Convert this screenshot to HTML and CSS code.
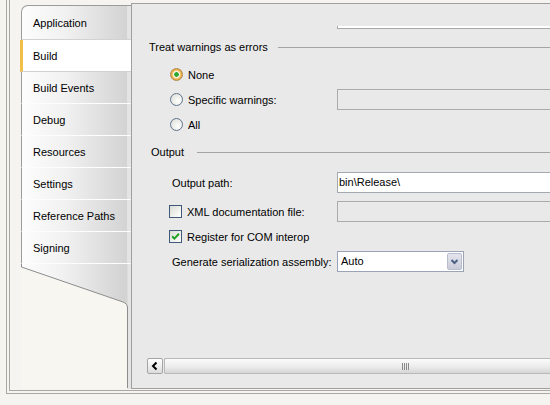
FILE: index.html
```html
<!DOCTYPE html>
<html>
<head>
<meta charset="utf-8">
<link rel="stylesheet" href="styles.css">
</head>
<body>
<div class="screen">
  <div class="frame">
    <div class="frame-inner">
      <nav class="tabs">
        <div class="tab first">Application</div>
        <div class="tab active">Build</div>
        <div class="tab">Build Events</div>
        <div class="tab">Debug</div>
        <div class="tab">Resources</div>
        <div class="tab">Settings</div>
        <div class="tab">Reference Paths</div>
        <div class="tab">Signing</div>
        <svg class="tail" width="110" height="125" viewBox="0 0 110 125">
          <defs>
            <linearGradient id="tg" x1="0" x2="1" y1="0" y2="0">
              <stop offset="0" stop-color="#fdfdfd"/>
              <stop offset="0.4" stop-color="#f1f1f1"/>
              <stop offset="0.96" stop-color="#d3d3d3"/>
            </linearGradient>
          </defs>
          <rect x="106" y="0" width="4" height="125" fill="#e4e4e4"/>
          <path d="M0,0 H106.5 V44 Q106,39.5 102,38 L0,3 Z" fill="url(#tg)"/>
          <path d="M0,3 L102,38 Q106,39.5 106,44 V125 H0 Z" fill="#f8f6f1"/>
          <path d="M0.5,0 V3 L102,38 Q106.5,39.5 106.5,44 V124" fill="none" stroke="#8c8c8c" stroke-width="1"/>
        </svg>
      </nav>
      <main class="panel">
        <div class="topbox"></div>
        <div class="legend legend-warn"><span>Treat warnings as errors</span><span class="rule"></span></div>
        <div class="options">
          <div class="row r-radio">
            <span class="lead"><span class="radio checked"></span><span class="label">None</span></span>
          </div>
          <div class="row r-radio">
            <span class="lead"><span class="radio"></span><span class="label">Specific warnings:</span></span>
            <span class="textbox disabled"></span>
          </div>
          <div class="row r-radio">
            <span class="lead"><span class="radio"></span><span class="label">All</span></span>
          </div>
        </div>
        <div class="legend legend-out"><span>Output</span><span class="rule"></span></div>
        <div class="row r-text r-path">
          <span class="lead">Output path:</span>
          <span class="textbox">bin\Release\</span>
        </div>
        <div class="row r-check r-xml">
          <span class="lead"><span class="check"></span><span class="label">XML documentation file:</span></span>
          <span class="textbox disabled"></span>
        </div>
        <div class="row r-check r-com">
          <span class="lead"><span class="check"><svg width="11" height="11" viewBox="0 0 11 11"><path d="M2.2 5.2 L4.4 7.6 L9 2.8" fill="none" stroke="#21a121" stroke-width="2"/></svg></span><span class="label">Register for COM interop</span></span>
        </div>
        <div class="row r-text r-gen">
          <span class="lead">Generate serialization assembly:</span>
          <span class="select"><span class="select-value">Auto</span><span class="select-btn"><svg width="13" height="15" viewBox="0 0 13 15"><path d="M3.5 6 L6.5 9 L9.5 6" fill="none" stroke="#4d6185" stroke-width="2"/></svg></span></span>
        </div>
        <div class="scrollbar">
          <span class="sb-btn"><svg width="14" height="14" viewBox="0 0 14 14"><path d="M8.5 3.5 L5 7 L8.5 10.5" fill="none" stroke="#000" stroke-width="2"/></svg></span>
          <span class="sb-thumb"><span class="grip"></span></span>
        </div>
      </main>
    </div>
  </div>
</div>
</body>
</html>
```
FILE: styles.css
```css
body {
  margin: 0;
  background: #f5f4f0;
  font: 11px "Liberation Sans", Arial, sans-serif;
  color: #000;
}
.screen {
  width: 550px;
  height: 405px;
  overflow: hidden;
}
.frame {
  margin-left: 6px;
  border-left: 1px solid #a9a8a3;
  border-bottom: 1px solid #a9a8a3;
  padding: 0 0 2px 2px;
}
.frame-inner {
  border-left: 1px solid #a9a8a3;
  border-bottom: 1px solid #a9a8a3;
  height: 390px;
  display: flex;
}
.tabs {
  margin-left: 11px;
  width: 110px;
  flex: none;
  display: flex;
  flex-direction: column;
  padding-top: 5px;
}
.tab {
  height: 31px;
  line-height: 32px;
  padding-left: 11px;
  border-left: 1px solid #9c9c9c;
  border-bottom: 1px solid #fdfdfd;
  background: linear-gradient(to right, #fdfdfd, #f1f1f1 40%, #d3d3d3 96%, #e4e4e4 96%);
  white-space: nowrap;
}
.tab.first {
  height: 33px;
  line-height: 34px;
  border-top: 1px solid #9c9c9c;
  border-top-left-radius: 7px;
  border-bottom-color: #d2d2d2;
}
.tab.active {
  background: #fff;
  border-left: 3px solid #f2c04a;
  margin-left: -1px;
  padding-left: 10px;
  border-bottom-color: #d2d2d2;
}
.tail {
  display: block;
  flex: none;
}
.panel {
  flex: 1;
  min-width: 0;
  margin-top: 3px;
  height: 386px;
  box-sizing: border-box;
  border: 1px solid #9f9f9f;
  border-right: none;
  background: #e9e9e9;
  overflow: hidden;
}
.topbox {
  margin: 22px 0 0 205px;
  height: 2px;
  background: #fff;
  border-left: 1px solid #a9a9a9;
  border-bottom: 1px solid #a9a9a9;
}
.legend {
  display: flex;
  align-items: center;
  height: 14px;
  white-space: nowrap;
}
.legend .rule {
  flex: 1;
  height: 0;
  border-top: 1px solid #a3a3a3;
}
.legend-warn {
  margin-top: 11px;
  padding-left: 17px;
}
.legend-warn .rule {
  margin-left: 10px;
}
.legend-out {
  margin-top: 8px;
  padding-left: 19px;
}
.legend-out .rule {
  margin-left: 13px;
}
.options {
  margin-top: 8px;
}
.row {
  display: flex;
  align-items: center;
  white-space: nowrap;
}
.lead {
  display: flex;
  align-items: center;
  flex: none;
}
.r-radio {
  height: 25px;
  margin-left: 38px;
}
.r-radio .lead {
  width: 167px;
}
.r-text {
  height: 21px;
  margin-left: 40px;
}
.r-text .lead {
  width: 165px;
}
.r-check {
  height: 21px;
  margin-left: 37px;
}
.r-check .lead {
  width: 168px;
}
.r-path {
  margin-top: 13px;
}
.r-xml {
  margin-top: 8px;
}
.r-com {
  margin-top: 4px;
}
.r-gen {
  margin-top: 4px;
}
.label {
  margin-left: 5px;
}
.radio {
  width: 13px;
  height: 13px;
  box-sizing: border-box;
  border-radius: 50%;
  border: 1px solid #5f7491;
  background: radial-gradient(circle at 65% 65%, #ffffff, #e4e3dc 75%);
  flex: none;
}
.radio.checked {
  border-color: #b08a52;
  background: radial-gradient(circle, #2fa82f 0 2px, #f6f2e6 2.6px 3.2px, #f4c86c 4px, #e3a23a 5.5px);
}
.check {
  width: 13px;
  height: 13px;
  box-sizing: border-box;
  border: 1px solid #40597a;
  background: linear-gradient(135deg, #dcdcd6, #ffffff);
  flex: none;
  display: flex;
}
.textbox {
  flex: none;
  width: 240px;
  height: 21px;
  box-sizing: border-box;
  border: 1px solid #a4a9b0;
  background: #fff;
  padding: 0 1px;
  line-height: 19px;
}
.textbox.disabled {
  border-color: #ababab;
  background: #e9e9e9;
}
.select {
  flex: none;
  width: 127px;
  height: 21px;
  box-sizing: border-box;
  border: 1px solid #9aa3b8;
  background: #fff;
  display: flex;
  align-items: stretch;
}
.select-value {
  flex: 1;
  padding-left: 3px;
  line-height: 19px;
}
.select-btn {
  width: 15px;
  margin: 1px;
  box-sizing: border-box;
  border: 1px solid #b8bccd;
  border-radius: 2px;
  background: linear-gradient(#e4e5ee, #c9ccd9);
  display: flex;
  align-items: center;
  justify-content: center;
}
.scrollbar {
  margin: 86px 0 0 15px;
  height: 16px;
  display: flex;
}
.sb-btn {
  width: 16px;
  height: 16px;
  box-sizing: border-box;
  border: 1px solid #a5a5a5;
  border-radius: 2px;
  background: linear-gradient(#ffffff, #dcdcdc);
  display: flex;
  align-items: center;
  justify-content: center;
  flex: none;
}
.sb-thumb {
  flex: 1;
  margin-left: 1px;
  box-sizing: border-box;
  border: 1px solid #b9b9b9;
  border-right: none;
  border-radius: 2px 0 0 2px;
  background: linear-gradient(#fbfbfb, #ececec 55%, #d6d6d6);
  display: flex;
  align-items: center;
  padding-left: 237px;
}
.grip {
  width: 7px;
  height: 7px;
  background: repeating-linear-gradient(to right, #8a8a8a 0 1px, transparent 1px 2px);
}
```
